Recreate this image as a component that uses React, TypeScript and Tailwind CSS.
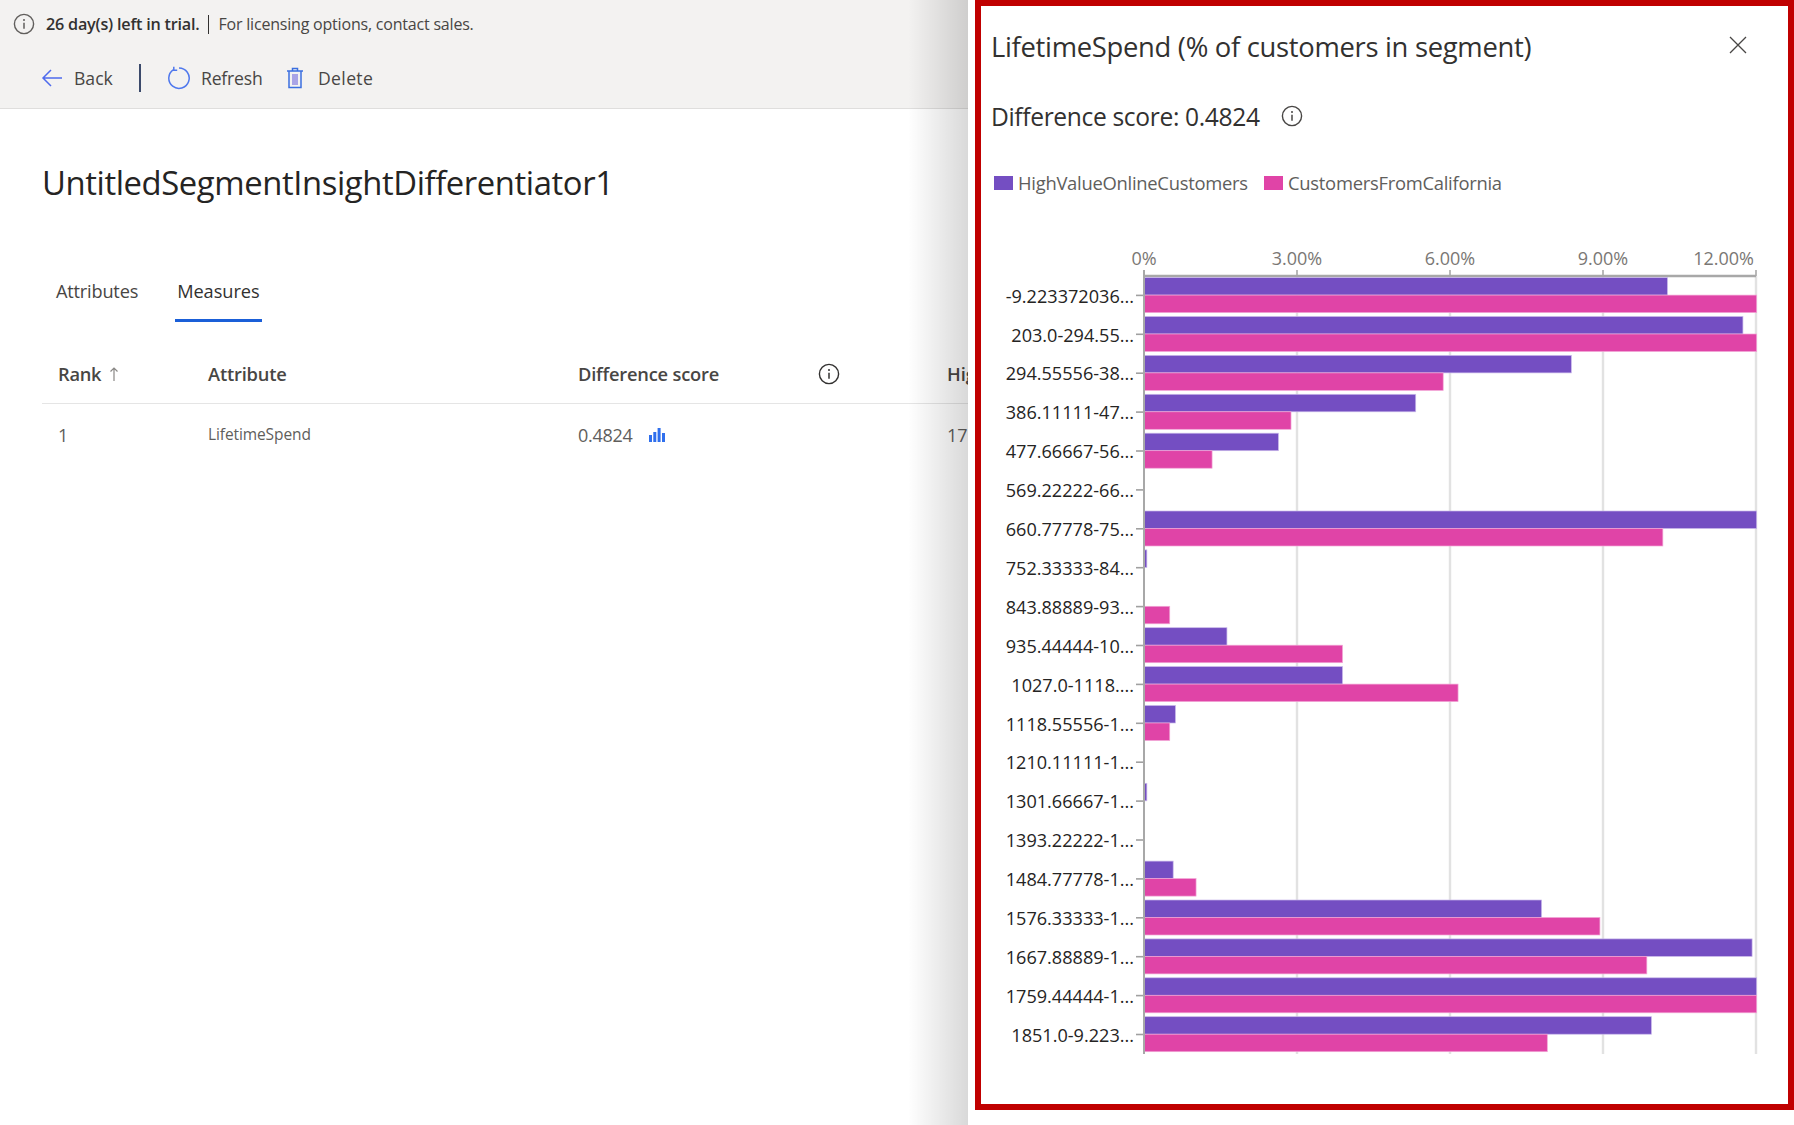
const rows: [string, number, number][] = [
  ["-9.223372036...", 1457, 1535],
  ["203.0-294.55...", 1523, 1535],
  ["294.55556-38...", 1373, 1261],
  ["386.11111-47...", 1237, 1128],
  ["477.66667-56...", 1117, 1059],
  ["569.22222-66...", 0, 0],
  ["660.77778-75...", 1535, 1453],
  ["752.33333-84...", 1002, 0],
  ["843.88889-93...", 0, 1022],
  ["935.44444-10...", 1072, 1173],
  ["1027.0-1118....", 1173, 1274],
  ["1118.55556-1...", 1027, 1022],
  ["1210.11111-1...", 0, 0],
  ["1301.66667-1...", 1002, 0],
  ["1393.22222-1...", 0, 0],
  ["1484.77778-1...", 1025, 1045],
  ["1576.33333-1...", 1347, 1398],
  ["1667.88889-1...", 1531, 1439],
  ["1759.44444-1...", 1535, 1535],
  ["1851.0-9.223...", 1443, 1352],
];

const w = (x: number) => (x === 0 ? 0 : (x - 999.5) * 1.1441);
const X0 = 163; // axis x inside svg
const TOP = 46; // axis y inside svg
const gridX = [153, 306, 459, 612];
const labels = ["0%", "3.00%", "6.00%", "9.00%", "12.00%"];

function Info({ className }: { className: string }) {
  return (
    <svg viewBox="0 0 22 22" className={className} fill="none" stroke="currentColor">
      <circle cx="11" cy="11" r="9.6" strokeWidth="1.4" />
      <path d="M11 9.8v6" strokeWidth="1.5" />
      <circle cx="11" cy="6.9" r="1" fill="currentColor" stroke="none" />
    </svg>
  );
}

function Chart() {
  return (
    <svg
      width="807"
      height="830"
      viewBox="0 0 807 830"
      className="block font-['Open_Sans',sans-serif]"
    >
      {gridX.map((g) => (
        <line key={g} x1={X0 + g} x2={X0 + g} y1={TOP} y2={TOP + 778} stroke="#e2e2e2" strokeWidth="2.4" />
      ))}
      <line x1={X0 - 1} x2={X0 + 612} y1={TOP} y2={TOP} stroke="#a8a8a8" strokeWidth="2.4" />
      {[0, ...gridX].map((g) => (
        <line key={g} x1={X0 + g} x2={X0 + g} y1={TOP - 6} y2={TOP} stroke="#a8a8a8" strokeWidth="1.6" />
      ))}
      {labels.map((l, i) => (
        <text
          key={l}
          x={i === 4 ? X0 + 610 : X0 + (i === 0 ? 0 : gridX[i - 1])}
          y={TOP - 11}
          textAnchor={i === 4 ? "end" : "middle"}
          fontSize="18"
          fill="#7a7774"
        >
          {l}
        </text>
      ))}
      {rows.map(([label, a, b], i) => {
        const top = TOP + 1.6 + 38.9 * i;
        return (
          <g key={label}>
            {a > 0 && (
              <rect x={X0} y={top} width={w(a)} height={17.5} fill="#744ec2" stroke="#c9b8ea" strokeWidth="0.7" />
            )}
            {b > 0 && (
              <rect x={X0} y={top + 17.5} width={w(b)} height={17.5} fill="#e044a7" stroke="#f2a6d6" strokeWidth="0.7" />
            )}
            <line x1={X0 - 8} x2={X0} y1={top + 17.8} y2={top + 17.8} stroke="#a0a0a0" strokeWidth="1.6" />
            <text x={X0 - 10} y={top + 25} textAnchor="end" fontSize="18.1" fill="#252423">
              {label}
            </text>
          </g>
        );
      })}
      <line x1={X0} x2={X0} y1={TOP - 6} y2={TOP + 778} stroke="#a8a8a8" strokeWidth="2" />
    </svg>
  );
}

export default function App() {
  return (
    <div className="flex w-[1794px] h-[1125px] bg-white overflow-hidden font-['Open_Sans',sans-serif] text-[#323130]">
      <main className="relative w-[968px] h-full overflow-hidden shrink-0">
        <header className="h-[109px] bg-[#f3f2f1] border-b border-[#dfdedd]">
          <div className="flex items-center h-[48px] pl-[13px]">
            <Info className="w-[22px] h-[22px] text-[#605e5c]" />
            <span className="ml-[11px] text-[16.2px] font-semibold tracking-[-0.22px] text-[#323130]">26 day(s) left in trial.</span>
            <span className="mx-[9px] w-px h-[19px] bg-[#323130]" />
            <span className="text-[16px] tracking-[-0.2px] text-[#484644]">For licensing options, contact sales.</span>
          </div>
          <div className="flex items-center h-[60px] pl-[41px] text-[17.6px] text-[#484644]">
            <svg viewBox="0 0 22 20" className="w-[22px] h-[20px] text-[#4f6bed]" fill="none" stroke="currentColor" strokeWidth="1.5">
              <path d="M21 10H2M10 2l-8 8 8 8" />
            </svg>
            <span className="ml-[11px] w-[65px]">Back</span>
            <span className="w-[2px] h-[28px] bg-[#3b4a6b]" />
            <svg viewBox="0 0 24 24" className="ml-[25px] w-[24px] h-[24px] text-[#4f78ed]" fill="none" stroke="currentColor" strokeWidth="1.5">
              <path d="M7.5 3.6A10.2 10.2 0 1 0 13 2" />
              <path d="M7.8 0.8v3.4h3.4" />
            </svg>
            <span className="ml-[11px] w-[85px] tracking-[-0.2px]">Refresh</span>
            <svg viewBox="0 0 18 22" className="w-[18px] h-[22px] text-[#3b6fe0]" fill="none" stroke="currentColor" strokeWidth="1.5">
              <path d="M1 4h16M6.5 4V1.5h5V4M3 4v16.5h12V4" />
              <path d="M6 7h6v11H6z" fill="#a9a4e6" stroke="none" />
            </svg>
            <span className="ml-[14px] tracking-[0.35px]">Delete</span>
          </div>
        </header>

        <div className="pl-[42px]">
          <h1 className="mt-[52px] h-[44px] flex items-center text-[32.8px] tracking-[-0.4px] font-medium text-[#252423] whitespace-nowrap">
            UntitledSegmentInsightDifferentiator1
          </h1>
          <nav className="mt-[67px] flex h-[50px] text-[18.2px]">
            <span className="ml-[14px] pt-[6px] tracking-[-0.2px] text-[#484644]">Attributes</span>
            <span className="ml-[39px] relative pt-[6px] font-medium tracking-[-0.05px] text-[#323130]">
              Measures
              <span className="absolute left-[-2px] right-[-2px] bottom-0 h-[3px] bg-[#1a5fd8]" />
            </span>
          </nav>

          <div className="mt-[26px] grid grid-cols-[150px_370px_369px_100px] w-[1000px] h-[56px] items-center pl-[16px] pb-[4px] border-b border-[#e5e5e5] text-[18.3px] font-semibold text-[#484644]">
            <span className="flex items-center gap-[8px] tracking-[-0.3px]">
              Rank
              <svg viewBox="0 0 10 16" className="w-[10px] h-[16px] text-[#8a8886]" fill="none" stroke="currentColor" strokeWidth="1.2">
                <path d="M5 15V2M1.5 5.5 5 2l3.5 3.5" />
              </svg>
            </span>
            <span className="tracking-[-0.2px]">Attribute</span>
            <span className="flex items-center tracking-[-0.2px] whitespace-nowrap">
              Difference score
              <Info className="ml-[99px] w-[22px] h-[22px] text-[#323130]" />
            </span>
            <span>HighValue</span>
          </div>
          <div className="grid grid-cols-[150px_370px_369px_100px] w-[1000px] h-[62px] items-center pl-[16px] text-[#605e5c]">
            <span className="text-[18px]">1</span>
            <span className="text-[15.5px] tracking-[-0.1px]">LifetimeSpend</span>
            <span className="flex items-center text-[18px] tracking-[-0.3px]">
              0.4824
              <svg viewBox="0 0 16 14" className="ml-[17px] w-[16px] h-[14px] text-[#2f6fed]" fill="currentColor">
                <path d="M0 7h3v7H0zM4.3 4h3v10h-3zM8.6 0h3v14h-3zM13 5h3v9h-3z" />
              </svg>
            </span>
            <span className="text-[18px]">175</span>
          </div>
        </div>

        <div className="absolute top-0 right-0 bottom-0 w-[60px] bg-gradient-to-r from-transparent to-black/15 pointer-events-none" />
      </main>

      <div className="flex-1 pl-[7px]">
        <aside className="h-[1110px] border-[6px] border-[#c00000] bg-white">
          <div className="relative flex items-center h-[72px] pl-[10px] pt-[10px]">
            <h2 className="text-[27.4px] font-medium tracking-[-0.3px] text-[#323130] whitespace-nowrap">
              LifetimeSpend (% of customers in segment)
            </h2>
            <svg viewBox="0 0 18 18" className="absolute top-[30px] left-[748px] w-[18px] h-[18px] text-[#484644]" fill="none" stroke="currentColor" strokeWidth="1.3">
              <path d="M1 1l16 16M17 1 1 17" />
            </svg>
          </div>
          <div className="flex items-center h-[50px] mt-[14px] pl-[10px]">
            <span className="text-[24.6px] font-medium tracking-[-0.35px] text-[#323130]">Difference score: 0.4824</span>
            <Info className="ml-[21px] mb-[2px] w-[22px] h-[22px] text-[#484644]" />
          </div>
          <div className="flex items-center h-[30px] mt-[26px] pl-[13px] text-[18.4px] text-[#605e5c] tracking-[-0.27px]">
            <span className="w-[19px] h-[14px] bg-[#744ec2]" />
            <span className="ml-[5px] w-[246px]">HighValueOnlineCustomers</span>
            <span className="w-[19px] h-[14px] bg-[#e044a7]" />
            <span className="ml-[5px]">CustomersFromCalifornia</span>
          </div>
          <div className="pt-[32px]">
            <Chart />
          </div>
        </aside>
      </div>
    </div>
  );
}
